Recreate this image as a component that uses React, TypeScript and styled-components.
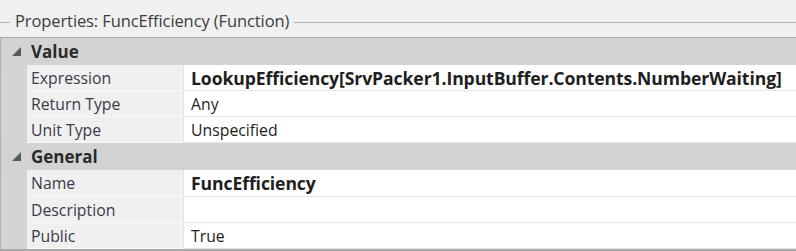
import React from "react";
import styled, { createGlobalStyle } from "styled-components";

const Global = createGlobalStyle`
  html, body { margin: 0; padding: 0; background: #f0f0f0; }
  body { width: 796px; height: 251px; overflow: hidden; font-family: "Open Sans", "Noto Sans", sans-serif; }
`;

const Panel = styled.div`
  width: 796px;
  height: 251px;
  background: #f0f0f0;
  display: flex;
  flex-direction: column;
  box-sizing: border-box;
`;

const TitleBar = styled.div`
  height: 38px;
  display: flex;
  align-items: center;
  gap: 5px;
  padding-top: 4px;
  box-sizing: border-box;
  border-bottom: 1px solid #a9a9a9;
`;

const TitleRule = styled.div<{ $grow?: boolean }>`
  height: 1px;
  background: #b4b4b4;
  flex: ${(p) => (p.$grow ? "1" : "0 0 10px")};
  margin-top: 3px;
`;

const TitleText = styled.span`
  font-size: 16.5px;
  color: #3c3c3c;
  letter-spacing: -0.1px;
`;

const Grid = styled.div`
  display: flex;
  flex-direction: column;
  border-left: 1px solid #b0b0b0;
  border-bottom: 2px solid #a9a9a9;
  background: #d4d4d4;
`;

const CategoryRow = styled.div`
  height: 27px;
  display: flex;
  align-items: center;
  background: #d3d3d3;
`;

const Expander = styled.div`
  width: 30px;
  display: flex;
  justify-content: center;
  align-items: center;
`;

const CategoryLabel = styled.span`
  font-size: 17px;
  font-weight: 700;
  color: #2a2a2a;
`;

const PropRow = styled.div<{ $tall?: boolean }>`
  height: ${(p) => (p.$tall ? "27px" : "26px")};
  display: flex;
  padding-left: 26px;
`;

const LabelCell = styled.div`
  width: 157px;
  flex: 0 0 157px;
  background: #f0f0f0;
  border-bottom: 1px solid #fafafa;
  border-right: 1px solid #e2e2e2;
  display: flex;
  align-items: center;
  padding-left: 4px;
  box-sizing: border-box;
  font-size: 15.8px;
  color: #3a3a4c;
`;

const ValueCell = styled.div<{ $bold?: boolean }>`
  flex: 1;
  background: #ffffff;
  border-bottom: 1px solid #e6e6e6;
  display: flex;
  align-items: center;
  padding-left: 7px;
  box-sizing: border-box;
  font-size: ${(p) => (p.$bold ? "17.6px" : "15.8px")};
  font-weight: ${(p) => (p.$bold ? 700 : 400)};
  letter-spacing: ${(p) => (p.$bold ? "-0.1px" : "0")};
  color: #1e1e1e;
  white-space: nowrap;
  overflow: hidden;
`;

const Triangle = () => (
  <svg width="9" height="9" viewBox="0 0 9 9">
    <polygon points="9,0 9,9 0,9" fill="#5a5a5a" />
  </svg>
);

type Prop = { label: string; value: string; bold?: boolean; tall?: boolean };
type Category = { name: string; props: Prop[] };

const data: Category[] = [
  {
    name: "Value",
    props: [
      { label: "Expression", value: "LookupEfficiency[SrvPacker1.InputBuffer.Contents.NumberWaiting]", bold: true },
      { label: "Return Type", value: "Any" },
      { label: "Unit Type", value: "Unspecified" },
    ],
  },
  {
    name: "General",
    props: [
      { label: "Name", value: "FuncEfficiency", bold: true, tall: true },
      { label: "Description", value: "" },
      { label: "Public", value: "True" },
    ],
  },
];

export default function App() {
  return (
    <Panel>
      <Global />
      <TitleBar>
        <TitleRule />
        <TitleText>Properties: FuncEfficiency (Function)</TitleText>
        <TitleRule $grow />
      </TitleBar>
      <Grid>
        {data.map((c) => (
          <React.Fragment key={c.name}>
            <CategoryRow>
              <Expander>
                <Triangle />
              </Expander>
              <CategoryLabel>{c.name}</CategoryLabel>
            </CategoryRow>
            {c.props.map((p) => (
              <PropRow key={p.label} $tall={p.tall}>
                <LabelCell>{p.label}</LabelCell>
                <ValueCell $bold={p.bold}>{p.value}</ValueCell>
              </PropRow>
            ))}
          </React.Fragment>
        ))}
      </Grid>
    </Panel>
  );
}
